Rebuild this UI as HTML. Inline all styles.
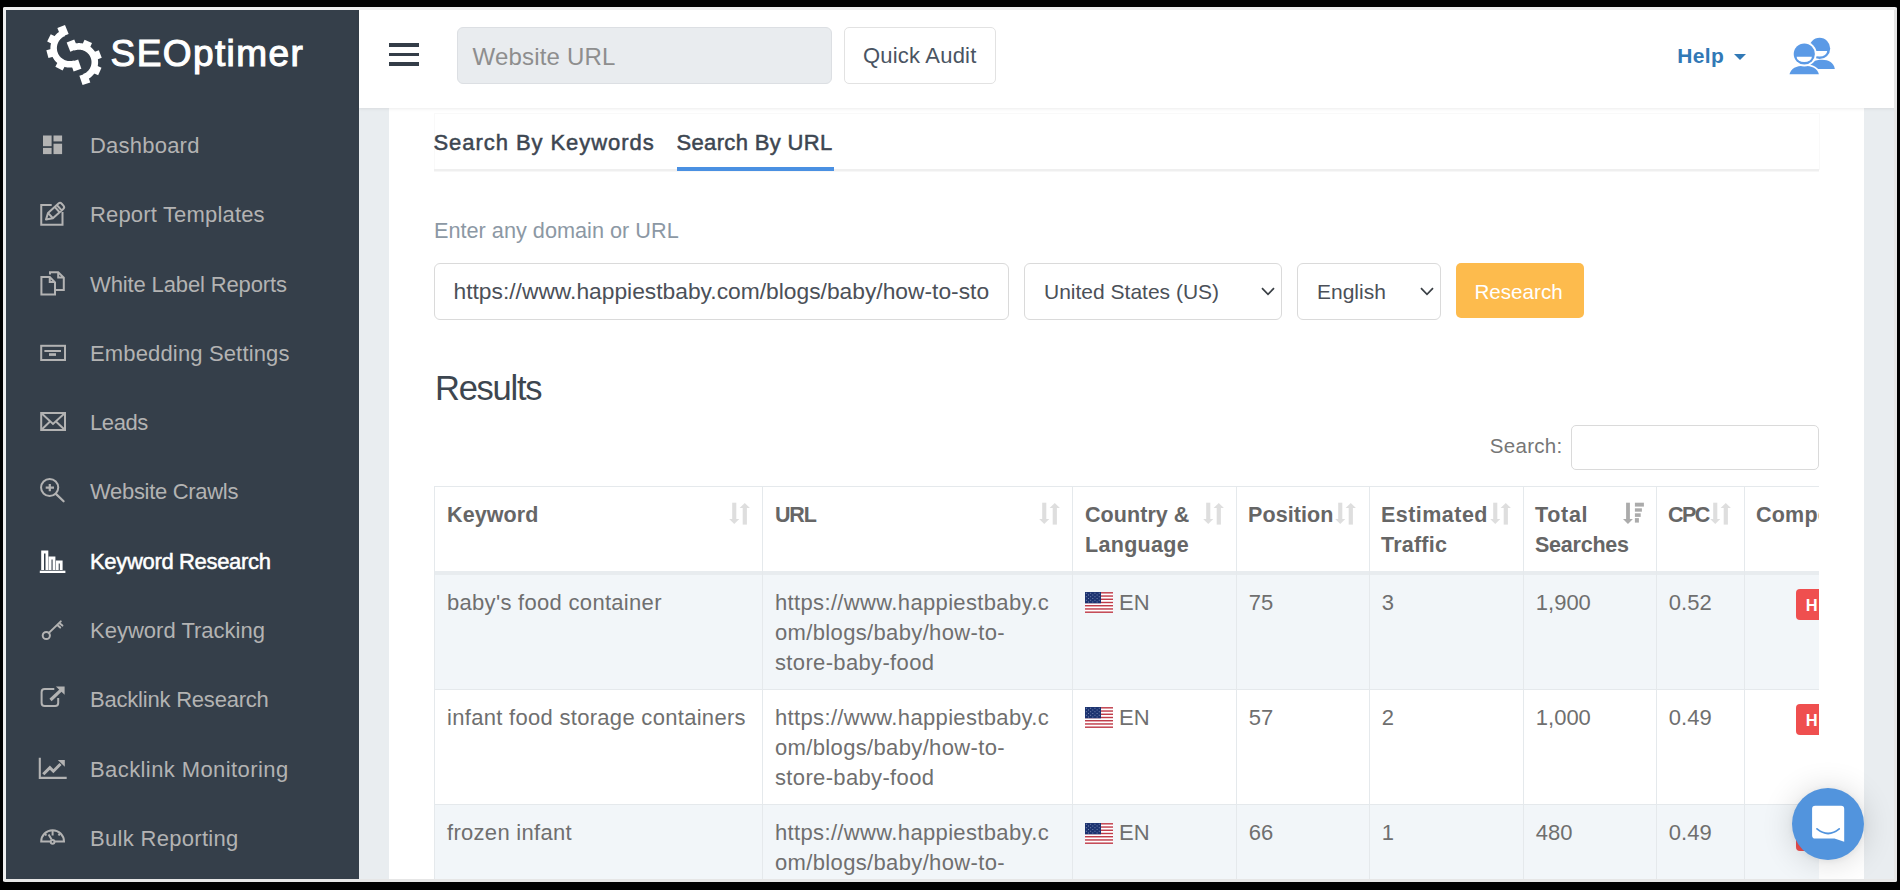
<!DOCTYPE html><html><head><meta charset="utf-8"><style>
html,body{margin:0;padding:0;background:#000;width:1900px;height:890px;overflow:hidden}
.abs{position:absolute;display:block}
.t{position:absolute;white-space:nowrap;font-family:"Liberation Sans",sans-serif}
#frame{position:absolute;left:3px;top:7px;width:1888px;height:869px;border:3px solid;border-color:#eeeeee #e6e6e6 #e6e6e6 #eeeeee;border-radius:2px;overflow:hidden;background:#e9edf0}
#in{position:absolute;left:-6px;top:-10px;width:1900px;height:890px}
</style></head><body>
<div id="frame"><div id="in">
<div class="abs" style="left:0;top:0;width:359px;height:890px;background:#353f4a"></div>
<svg class="abs" style="left:0;top:0" width="130" height="100" viewBox="0 0 130 100"><path d="M76.25,66.54 L75.61,66.74 L74.97,66.93 L74.32,67.09 L73.67,67.23 L73.01,67.35 L72.34,67.45 L71.68,67.52 L71.01,67.57 L70.34,67.59 L69.67,67.60 L69.00,67.58 L68.34,67.54 L67.67,67.47 L67.01,67.38 L66.35,67.27 L65.69,67.14 L65.04,66.98 L64.39,66.81 L63.76,66.61 L63.12,66.38 L62.50,66.14 L61.89,65.88 L61.28,65.59 L60.69,65.29 L60.10,64.96 L59.53,64.61 L58.97,64.25 L58.42,63.86 L57.89,63.46 L57.37,63.04 L56.86,62.60 L56.37,62.14 L55.90,61.67 L55.44,61.18 L55.00,60.68 L54.58,60.16 L54.17,59.63 L53.78,59.08 L53.42,58.52 L53.07,57.95 L52.74,57.36 L52.43,56.77 L52.15,56.17 L51.88,55.55 L51.63,54.93 L51.41,54.30 L51.21,53.66 L51.03,53.02 L50.87,52.36 L50.74,51.71 L50.62,51.05 L50.53,50.39 L50.47,49.72 L50.42,49.05 L50.40,48.38 L50.40,47.71 L50.43,47.05 L50.48,46.38 L50.55,45.71 L50.64,45.05 L50.76,44.39 L50.89,43.74 L51.06,43.09 L51.24,42.44 L51.44,41.81 L51.67,41.18 L51.92,40.55 L52.19,39.94 L52.48,39.34 L52.79,38.75 L53.12,38.16 L53.47,37.59 L53.84,37.04 L54.23,36.49 L54.64,35.96 L55.06,35.44 L55.51,34.94 L55.97,34.46 L56.44,33.99 L56.94,33.53 L57.44,33.10 L57.97,32.68 L58.50,32.28 L59.05,31.90 L59.61,31.53 L60.19,31.19 L60.78,30.87 L61.37,30.56 L61.98,30.28 L62.60,30.02 L65.03,36.05 L64.62,36.22 L64.21,36.41 L63.82,36.61 L63.43,36.83 L63.04,37.06 L62.67,37.30 L62.30,37.55 L61.94,37.82 L61.60,38.10 L61.26,38.39 L60.93,38.69 L60.61,39.00 L60.31,39.33 L60.01,39.66 L59.73,40.01 L59.45,40.36 L59.19,40.72 L58.95,41.10 L58.71,41.48 L58.49,41.86 L58.29,42.26 L58.09,42.66 L57.91,43.07 L57.75,43.48 L57.60,43.90 L57.46,44.33 L57.34,44.76 L57.23,45.19 L57.14,45.63 L57.06,46.07 L57.00,46.51 L56.95,46.95 L56.92,47.40 L56.90,47.84 L56.90,48.29 L56.92,48.74 L56.94,49.18 L56.99,49.62 L57.05,50.07 L57.12,50.51 L57.21,50.94 L57.32,51.38 L57.44,51.81 L57.57,52.23 L57.72,52.65 L57.89,53.07 L58.06,53.48 L58.26,53.88 L58.46,54.28 L58.68,54.67 L58.91,55.05 L59.16,55.42 L59.41,55.78 L59.68,56.14 L59.97,56.49 L60.26,56.82 L60.56,57.15 L60.88,57.46 L61.21,57.77 L61.54,58.06 L61.89,58.34 L62.25,58.61 L62.61,58.86 L62.99,59.11 L63.37,59.34 L63.76,59.56 L64.15,59.76 L64.56,59.95 L64.97,60.13 L65.38,60.29 L65.80,60.44 L66.23,60.57 L66.66,60.69 L67.09,60.79 L67.53,60.88 L67.97,60.96 L68.41,61.01 L68.86,61.06 L69.30,61.09 L69.75,61.10 L70.19,61.10 L70.64,61.08 L71.09,61.05 L71.53,61.00 L71.97,60.93 L72.41,60.86 L72.85,60.76 L73.28,60.65 L73.71,60.53 L74.13,60.39Z" fill="#fff"/><rect x="13.50" y="-4.10" width="9.80" height="8.2" fill="#fff" transform="translate(69.9,48.1) rotate(71)"/><rect x="13.50" y="-4.10" width="9.80" height="8.2" fill="#fff" transform="translate(69.9,48.1) rotate(118)"/><rect x="13.50" y="-4.10" width="9.80" height="8.2" fill="#fff" transform="translate(69.9,48.1) rotate(165)"/><rect x="13.50" y="-4.10" width="9.80" height="8.2" fill="#fff" transform="translate(69.9,48.1) rotate(206)"/><rect x="13.50" y="-4.10" width="9.80" height="8.2" fill="#fff" transform="translate(69.9,48.1) rotate(248)"/><path d="M71.85,44.49 L72.48,44.25 L73.12,44.03 L73.77,43.83 L74.42,43.66 L75.08,43.51 L75.75,43.38 L76.42,43.28 L77.09,43.20 L77.77,43.14 L78.44,43.11 L79.12,43.10 L79.80,43.12 L80.48,43.16 L81.15,43.22 L81.82,43.31 L82.49,43.42 L83.16,43.56 L83.81,43.72 L84.47,43.90 L85.11,44.10 L85.75,44.33 L86.38,44.58 L87.00,44.86 L87.61,45.15 L88.21,45.47 L88.80,45.81 L89.37,46.16 L89.94,46.54 L90.49,46.94 L91.02,47.36 L91.54,47.79 L92.04,48.25 L92.53,48.72 L93.00,49.21 L93.45,49.71 L93.89,50.23 L94.30,50.77 L94.70,51.32 L95.07,51.88 L95.43,52.46 L95.76,53.05 L96.08,53.65 L96.37,54.26 L96.64,54.88 L96.89,55.51 L97.12,56.15 L97.32,56.80 L97.50,57.45 L97.66,58.11 L97.79,58.77 L97.90,59.44 L97.99,60.12 L98.05,60.79 L98.09,61.47 L98.10,62.14 L98.09,62.82 L98.06,63.50 L98.00,64.17 L97.92,64.85 L97.81,65.52 L97.68,66.18 L97.53,66.84 L97.35,67.50 L97.15,68.14 L96.93,68.78 L96.68,69.42 L96.42,70.04 L96.13,70.65 L95.82,71.26 L95.49,71.85 L95.13,72.42 L94.76,72.99 L94.37,73.54 L93.95,74.08 L93.52,74.60 L93.07,75.11 L92.61,75.60 L92.12,76.08 L91.62,76.53 L91.11,76.97 L90.57,77.39 L90.03,77.79 L89.47,78.18 L88.89,78.54 L88.31,78.88 L87.71,79.20 L87.10,79.50 L86.48,79.77 L85.86,80.03 L85.22,80.26 L83.07,74.02 L83.49,73.87 L83.90,73.70 L84.30,73.52 L84.70,73.32 L85.09,73.12 L85.48,72.89 L85.85,72.66 L86.22,72.41 L86.57,72.14 L86.92,71.87 L87.26,71.58 L87.59,71.28 L87.91,70.97 L88.21,70.65 L88.51,70.32 L88.79,69.98 L89.06,69.62 L89.31,69.26 L89.56,68.89 L89.79,68.51 L90.01,68.13 L90.21,67.73 L90.40,67.33 L90.57,66.92 L90.73,66.51 L90.88,66.09 L91.01,65.67 L91.13,65.24 L91.23,64.81 L91.31,64.37 L91.38,63.93 L91.43,63.49 L91.47,63.05 L91.49,62.61 L91.50,62.16 L91.49,61.72 L91.47,61.28 L91.43,60.84 L91.37,60.40 L91.30,59.96 L91.21,59.52 L91.11,59.09 L90.99,58.66 L90.86,58.24 L90.71,57.82 L90.55,57.41 L90.37,57.00 L90.18,56.60 L89.97,56.21 L89.75,55.82 L89.52,55.45 L89.27,55.08 L89.01,54.72 L88.74,54.37 L88.46,54.03 L88.16,53.70 L87.85,53.38 L87.54,53.07 L87.21,52.77 L86.87,52.49 L86.52,52.21 L86.16,51.95 L85.79,51.70 L85.41,51.47 L85.03,51.25 L84.64,51.04 L84.24,50.85 L83.83,50.67 L83.42,50.51 L83.00,50.36 L82.58,50.22 L82.15,50.10 L81.72,50.00 L81.29,49.91 L80.85,49.84 L80.41,49.78 L79.97,49.74 L79.52,49.71 L79.08,49.70 L78.64,49.71 L78.19,49.73 L77.75,49.76 L77.31,49.81 L76.87,49.88 L76.44,49.97 L76.00,50.06 L75.58,50.18 L75.15,50.31 L74.73,50.45 L74.32,50.61Z" fill="#fff"/><rect x="13.00" y="-4.10" width="9.80" height="8.2" fill="#fff" transform="translate(79,62.2) rotate(-112)"/><rect x="13.00" y="-4.10" width="9.80" height="8.2" fill="#fff" transform="translate(79,62.2) rotate(-66)"/><rect x="13.00" y="-4.10" width="9.80" height="8.2" fill="#fff" transform="translate(79,62.2) rotate(-21)"/><rect x="13.00" y="-4.10" width="9.80" height="8.2" fill="#fff" transform="translate(79,62.2) rotate(24)"/><rect x="13.00" y="-4.10" width="9.80" height="8.2" fill="#fff" transform="translate(79,62.2) rotate(71)"/></svg><div class="t" style="left:110.60px;top:30.08px;font-size:37px;line-height:48px;font-weight:400;color:#fff;letter-spacing:1.4px;-webkit-text-stroke:1.1px #fff;">SEOptimer</div>
<div class="t" style="left:90.00px;top:130.88px;font-size:22px;line-height:29px;font-weight:400;color:#b3b3b3;letter-spacing:0.22px;">Dashboard</div>
<svg class="abs" style="left:36px;top:127.70px" width="34" height="34" viewBox="0 0 34 34" overflow="visible"><rect x="7" y="7.5" width="8.6" height="10.7" fill="#b3b3b3"/><rect x="7" y="19.9" width="8.6" height="6.2" fill="#b3b3b3"/><rect x="17.5" y="7.5" width="8.6" height="5.9" fill="#b3b3b3"/><rect x="17.5" y="15.7" width="8.6" height="10.4" fill="#b3b3b3"/></svg>
<div class="t" style="left:90.00px;top:199.88px;font-size:22px;line-height:29px;font-weight:400;color:#b3b3b3;letter-spacing:0.17px;">Report Templates</div>
<svg class="abs" style="left:36px;top:196.70px" width="34" height="34" viewBox="0 0 34 34" overflow="visible"><path d="M15.7,8 H5.25 V27.7 H26.5 V15.1" fill="none" stroke="#b3b3b3" stroke-width="2"/>
<g transform="translate(10,22.6) rotate(-42)"><path d="M0,0 L6,-3.6 H20 Q22.3,-3.6 22.3,-1.3 V1.3 Q22.3,3.6 20,3.6 H6 Z M6,-3.6 V3.6 M15,-3.6 V3.6 M17.8,-3.6 V3.6" fill="none" stroke="#b3b3b3" stroke-width="2" stroke-linejoin="round"/></g></svg>
<div class="t" style="left:90.00px;top:269.88px;font-size:22px;line-height:29px;font-weight:400;color:#b3b3b3;letter-spacing:-0.13px;">White Label Reports</div>
<svg class="abs" style="left:36px;top:266.00px" width="34" height="34" viewBox="0 0 34 34" overflow="visible"><path d="M5.4,28.4 V11.1 H13.75 L19,16.3 V28.4 Z M13.75,11.1 V16 H19" fill="none" stroke="#b3b3b3" stroke-width="2" stroke-linejoin="miter"/>
<path d="M14,8.5 V6.3 H22.2 L27.8,11.6 V24 H20 M22.2,6.3 V11.6 H27.8" fill="none" stroke="#b3b3b3" stroke-width="2"/></svg>
<div class="t" style="left:90.00px;top:338.88px;font-size:22px;line-height:29px;font-weight:400;color:#b3b3b3;letter-spacing:0.15px;">Embedding Settings</div>
<svg class="abs" style="left:36px;top:335.70px" width="34" height="34" viewBox="0 0 34 34" overflow="visible"><rect x="5.2" y="9.8" width="23.8" height="14.2" fill="none" stroke="#b3b3b3" stroke-width="2"/><rect x="8.4" y="14" width="16.6" height="2" fill="#b3b3b3"/><rect x="13" y="17.2" width="7" height="2.7" fill="#b3b3b3"/></svg>
<div class="t" style="left:90.00px;top:407.88px;font-size:22px;line-height:29px;font-weight:400;color:#b3b3b3;letter-spacing:-0.4px;">Leads</div>
<svg class="abs" style="left:36px;top:404.70px" width="34" height="34" viewBox="0 0 34 34" overflow="visible"><rect x="5.2" y="8" width="23.8" height="17" fill="none" stroke="#b3b3b3" stroke-width="2"/><path d="M5.5,8.3 L17,19 L28.7,8.3 M5.5,24.7 L13.5,17 M28.7,24.7 L20.5,17" fill="none" stroke="#b3b3b3" stroke-width="2"/></svg>
<div class="t" style="left:90.00px;top:476.88px;font-size:22px;line-height:29px;font-weight:400;color:#b3b3b3;letter-spacing:-0.31px;">Website Crawls</div>
<svg class="abs" style="left:36px;top:473.70px" width="34" height="34" viewBox="0 0 34 34" overflow="visible"><circle cx="13.65" cy="13.5" r="8.6" fill="none" stroke="#b3b3b3" stroke-width="2"/><path d="M9.7,13.7 H18 M13.8,9.9 V17.2" stroke="#b3b3b3" stroke-width="2.2"/><path d="M19.9,19.9 L27.6,27.3" stroke="#b3b3b3" stroke-width="2.2" stroke-linecap="round"/></svg>
<div class="t" style="left:90.00px;top:546.88px;font-size:22px;line-height:29px;font-weight:400;color:#fff;letter-spacing:-0.33px;-webkit-text-stroke:0.5px #fff;">Keyword Research</div>
<svg class="abs" style="left:36px;top:543.70px" width="34" height="34" viewBox="0 0 34 34" overflow="visible"><path d="M6.6,26 V8 H10.9 V26 M14.1,26 V14 H18 V26 M21.3,26 V18 H25.2 V26" fill="none" stroke="#fff" stroke-width="2.8"/><rect x="3.8" y="26.7" width="25.6" height="2.3" fill="#fff"/></svg>
<div class="t" style="left:90.00px;top:615.88px;font-size:22px;line-height:29px;font-weight:400;color:#b3b3b3;letter-spacing:0.01px;">Keyword Tracking</div>
<svg class="abs" style="left:36px;top:612.70px" width="34" height="34" viewBox="0 0 34 34" overflow="visible"><circle cx="10.3" cy="22.5" r="3.6" fill="none" stroke="#b3b3b3" stroke-width="2"/><path d="M12.9,19.9 L24.8,8.4 M21.6,12.2 L24.2,14.5 M23.5,10.2 L26.4,12.6" fill="none" stroke="#b3b3b3" stroke-width="2" stroke-linecap="round"/></svg>
<div class="t" style="left:90.00px;top:684.88px;font-size:22px;line-height:29px;font-weight:400;color:#b3b3b3;letter-spacing:-0.21px;">Backlink Research</div>
<svg class="abs" style="left:36px;top:681.70px" width="34" height="34" viewBox="0 0 34 34" overflow="visible"><path d="M18.3,7 H8.6 A3,3 0 0 0 5.6,10 V21 A3,3 0 0 0 8.6,24 H19.2 A3,3 0 0 0 22.2,21 V16" fill="none" stroke="#b3b3b3" stroke-width="2"/><path d="M14.5,18 L25,8.2" stroke="#b3b3b3" stroke-width="3.2"/><path d="M19.9,4.4 H28.6 V12.8 Z" fill="#b3b3b3"/></svg>
<div class="t" style="left:90.00px;top:754.88px;font-size:22px;line-height:29px;font-weight:400;color:#b3b3b3;letter-spacing:0.41px;">Backlink Monitoring</div>
<svg class="abs" style="left:36px;top:751.70px" width="34" height="34" viewBox="0 0 34 34" overflow="visible"><path d="M3.8,5.7 V25.9 H30.7" fill="none" stroke="#b3b3b3" stroke-width="2.1"/><path d="M7.3,22.3 L13.9,15.6 L17.4,19.2 L24.5,12" fill="none" stroke="#b3b3b3" stroke-width="3"/><path d="M21.8,8 H28.8 V14.7 Z" fill="#b3b3b3"/></svg>
<div class="t" style="left:90.00px;top:823.88px;font-size:22px;line-height:29px;font-weight:400;color:#b3b3b3;letter-spacing:0.31px;">Bulk Reporting</div>
<svg class="abs" style="left:36px;top:820.70px" width="34" height="34" viewBox="0 0 34 34" overflow="visible"><path d="M14.6,20.6 H5.2 A11.4,11.4 0 0 1 28,20.6 H18.6" fill="none" stroke="#b3b3b3" stroke-width="2"/><circle cx="16.6" cy="20.8" r="1.9" fill="none" stroke="#b3b3b3" stroke-width="2"/><path d="M16.6,9.9 V14.5 M8.9,12.5 L10.3,14.5 M23.8,12.5 L22.6,14.5 M12.6,13.6 L15.6,18.6" fill="none" stroke="#b3b3b3" stroke-width="2"/></svg>
<div class="abs" style="left:359px;top:0;width:1541px;height:108px;background:#fff;box-shadow:0 1px 3px rgba(0,0,0,0.08);z-index:3"></div>
<div class="abs" style="z-index:4;left:0;top:0"><div class="abs" style="left:389px;top:43px;width:30px;height:4px;background:#343d48"></div>
<div class="abs" style="left:389px;top:52.5px;width:30px;height:3.8px;background:#343d48"></div>
<div class="abs" style="left:389px;top:62px;width:30px;height:4px;background:#343d48"></div>
<div class="abs" style="left:457px;top:27px;width:373px;height:55px;background:#e9ecef;border:1px solid #dcdfe3;border-radius:6px"></div>
<div class="t" style="left:472.50px;top:41.38px;font-size:24px;line-height:31px;font-weight:400;color:#8e8e8e;letter-spacing:0.2px;">Website URL</div>

<div class="abs" style="left:844px;top:27px;width:150px;height:55px;background:#fff;border:1px solid #e2e2e2;border-radius:5px"></div>
<div class="t" style="left:863.00px;top:41.08px;font-size:22px;line-height:29px;font-weight:400;color:#4a5462;letter-spacing:0.2px;">Quick Audit</div>

<div class="t" style="left:1677.30px;top:41.92px;font-size:21px;line-height:27px;font-weight:700;color:#3179b6;letter-spacing:0.35px;">Help</div>

<svg class="abs" style="left:1734px;top:54px" width="12" height="6" viewBox="0 0 12 6"><path d="M0,0 H12 L6,6 Z" fill="#3179b6"/></svg>
<svg class="abs" style="left:1780px;top:30px" width="60" height="50" viewBox="1780 30 60 50">
<circle cx="1819.6" cy="48.4" r="10.6" fill="#5b9ae6"/>
<path d="M1812,51 H1827.2 A7.6,5.5 0 0 1 1812,51 Z" fill="#fff"/>
<path d="M1808,68.9 C1810,62 1815,59.8 1822,59.8 C1829,59.8 1833.5,62.5 1834.8,68.9 Z" fill="#5b9ae6"/>
<path d="M1787,75.5 C1788.5,67.5 1795,64 1804,64 C1813,64 1819.5,67.5 1821.2,75.5 Z" fill="#fff"/>
<path d="M1789.5,74.2 C1791,68.5 1796,65.8 1804,65.8 C1812,65.8 1817.5,68.5 1818.9,74.2 Z" fill="#5b9ae6"/>
<circle cx="1804.3" cy="54" r="12.5" fill="#fff"/>
<circle cx="1804.3" cy="54" r="10.6" fill="#5b9ae6"/>
<path d="M1796.6,56.8 H1811.9 A7.65,5.3 0 0 1 1796.6,56.8 Z" fill="#fff"/>
</svg></div>
<div class="abs" style="left:389px;top:108px;width:1475px;height:790px;background:#fff"></div>
<div class="abs" style="left:434px;top:113px;width:1384px;height:56px;border:1px solid #f9f9f9;border-bottom:none"></div>
<div class="abs" style="left:434px;top:169px;width:1385px;height:2px;background:#efefef"></div><div class="abs" style="left:434px;top:171px;width:1385px;height:1px;background:#f7f7f7"></div>
<div class="t" style="left:433.50px;top:127.88px;font-size:22px;line-height:29px;font-weight:400;color:#3d4651;letter-spacing:0.94px;-webkit-text-stroke:0.5px #3d4651;">Search By Keywords</div>
<div class="t" style="left:676.50px;top:127.88px;font-size:22px;line-height:29px;font-weight:400;color:#3d4651;letter-spacing:0.34px;-webkit-text-stroke:0.5px #3d4651;">Search By URL</div>
<div class="abs" style="left:677px;top:167px;width:157px;height:3.6px;background:#4a90e2"></div>
<div class="t" style="left:434.00px;top:216.68px;font-size:21.7px;line-height:28px;font-weight:400;color:#8c98a4;">Enter any domain or URL</div>
<div class="abs" style="left:434px;top:263px;width:573px;height:55px;border:1px solid #dadada;border-radius:6px;background:#fff"></div>
<div class="abs" style="left:435px;top:264px;width:556px;height:55px;overflow:hidden"><div class="t" style="left:18.50px;top:11.70px;font-size:22.8px;line-height:30px;font-weight:400;color:#4b5058;">https://www.happiestbaby.com/blogs/baby/how-to-sto</div>
</div>
<div class="abs" style="left:1024px;top:263px;width:256px;height:55px;border:1px solid #dadada;border-radius:6px;background:#fff"></div>
<div class="t" style="left:1044.00px;top:277.72px;font-size:21px;line-height:27px;font-weight:400;color:#4b5058;">United States (US)</div>
<svg class="abs" style="left:1261px;top:287px" width="14" height="9" viewBox="0 0 14 9"><path d="M1,1.2 L7,7.4 L13,1.2" fill="none" stroke="#3a3f45" stroke-width="1.7"/></svg>
<div class="abs" style="left:1297px;top:263px;width:142px;height:55px;border:1px solid #dadada;border-radius:6px;background:#fff"></div>
<div class="t" style="left:1317.00px;top:277.72px;font-size:21px;line-height:27px;font-weight:400;color:#4b5058;">English</div>
<svg class="abs" style="left:1420px;top:287px" width="14" height="9" viewBox="0 0 14 9"><path d="M1,1.2 L7,7.4 L13,1.2" fill="none" stroke="#3a3f45" stroke-width="1.7"/></svg>
<div class="abs" style="left:1456px;top:263px;width:128px;height:55px;background:#fdbb4d;border-radius:5px"></div>
<div class="t" style="left:1474.50px;top:278.06px;font-size:20.6px;line-height:27px;font-weight:400;color:#fff;">Research</div>
<div class="t" style="left:435.00px;top:366.15px;font-size:34.5px;line-height:45px;font-weight:400;color:#3d4650;letter-spacing:-1.25px;">Results</div>
<div class="t" style="left:1489.80px;top:432.20px;font-size:20.5px;line-height:27px;font-weight:400;color:#767676;letter-spacing:0.3px;">Search:</div>
<div class="abs" style="left:1571px;top:425px;width:246px;height:43px;border:1px solid #dadada;border-radius:5px;background:#fff"></div>
<div class="abs" style="left:0;top:0;width:1819px;height:890px;overflow:hidden"><div class="abs" style="left:434px;top:575px;width:1400px;height:114.5px;background:#f2f6f9"></div>
<div class="abs" style="left:434px;top:804.3px;width:1400px;height:100px;background:#f2f6f9"></div>
<div class="abs" style="left:434px;top:486px;width:1400px;height:1px;background:#e5e9ec"></div>
<div class="abs" style="left:434px;top:571px;width:1400px;height:4px;background:#e8ecef"></div>
<div class="abs" style="left:434px;top:689.0px;width:1400px;height:1px;background:#e5e9ec"></div>
<div class="abs" style="left:434px;top:803.8px;width:1400px;height:1px;background:#e5e9ec"></div>
<div class="abs" style="left:434.0px;top:486px;width:1px;height:410px;background:#e5e9ec"></div>
<div class="abs" style="left:762.0px;top:486px;width:1px;height:410px;background:#e5e9ec"></div>
<div class="abs" style="left:1072.0px;top:486px;width:1px;height:410px;background:#e5e9ec"></div>
<div class="abs" style="left:1235.8px;top:486px;width:1px;height:410px;background:#e5e9ec"></div>
<div class="abs" style="left:1368.8px;top:486px;width:1px;height:410px;background:#e5e9ec"></div>
<div class="abs" style="left:1522.9px;top:486px;width:1px;height:410px;background:#e5e9ec"></div>
<div class="abs" style="left:1656.2px;top:486px;width:1px;height:410px;background:#e5e9ec"></div>
<div class="abs" style="left:1743.6px;top:486px;width:1px;height:410px;background:#e5e9ec"></div>
<div class="t" style="left:447.00px;top:500.55px;font-size:21.5px;line-height:28px;font-weight:700;color:#666;letter-spacing:0.1px;">Keyword</div>

<div class="t" style="left:775.00px;top:500.55px;font-size:21.5px;line-height:28px;font-weight:700;color:#666;letter-spacing:-1.2px;">URL</div>

<div class="t" style="left:1085.00px;top:500.55px;font-size:21.5px;line-height:28px;font-weight:700;color:#666;letter-spacing:0.06px;">Country &amp;</div>

<div class="t" style="left:1085.00px;top:530.75px;font-size:21.5px;line-height:28px;font-weight:700;color:#666;letter-spacing:0.31px;">Language</div>

<div class="t" style="left:1248.00px;top:500.55px;font-size:21.5px;line-height:28px;font-weight:700;color:#666;letter-spacing:0.09px;">Position</div>

<div class="t" style="left:1381.00px;top:500.55px;font-size:21.5px;line-height:28px;font-weight:700;color:#666;letter-spacing:0.46px;">Estimated</div>

<div class="t" style="left:1381.00px;top:530.75px;font-size:21.5px;line-height:28px;font-weight:700;color:#666;letter-spacing:0.22px;">Traffic</div>

<div class="t" style="left:1535.00px;top:500.55px;font-size:21.5px;line-height:28px;font-weight:700;color:#666;letter-spacing:0.7px;">Total</div>

<div class="t" style="left:1535.00px;top:530.75px;font-size:21.5px;line-height:28px;font-weight:700;color:#666;letter-spacing:-0.23px;">Searches</div>

<div class="t" style="left:1668.00px;top:500.55px;font-size:21.5px;line-height:28px;font-weight:700;color:#666;letter-spacing:-1.6px;">CPC</div>

<div class="t" style="left:1756.00px;top:500.55px;font-size:21.5px;line-height:28px;font-weight:700;color:#666;letter-spacing:0.2px;">Competition</div>

<svg class="abs" style="left:724px;top:498px" width="32" height="32" viewBox="0 0 32 32"><rect x="8.2" y="4.7" width="4.1" height="16.5" fill="#dedede"/><path d="M5.2,20.9 H15.3 L10.25,25.9 Z" fill="#dedede"/><path d="M15.6,9.9 H25.9 L20.75,5 Z" fill="#dedede"/><rect x="18.7" y="9.5" width="4.2" height="17.1" fill="#dedede"/></svg>
<svg class="abs" style="left:1034px;top:498px" width="32" height="32" viewBox="0 0 32 32"><rect x="8.2" y="4.7" width="4.1" height="16.5" fill="#dedede"/><path d="M5.2,20.9 H15.3 L10.25,25.9 Z" fill="#dedede"/><path d="M15.6,9.9 H25.9 L20.75,5 Z" fill="#dedede"/><rect x="18.7" y="9.5" width="4.2" height="17.1" fill="#dedede"/></svg>
<svg class="abs" style="left:1198px;top:498px" width="32" height="32" viewBox="0 0 32 32"><rect x="8.2" y="4.7" width="4.1" height="16.5" fill="#dedede"/><path d="M5.2,20.9 H15.3 L10.25,25.9 Z" fill="#dedede"/><path d="M15.6,9.9 H25.9 L20.75,5 Z" fill="#dedede"/><rect x="18.7" y="9.5" width="4.2" height="17.1" fill="#dedede"/></svg>
<svg class="abs" style="left:1330px;top:498px" width="32" height="32" viewBox="0 0 32 32"><rect x="8.2" y="4.7" width="4.1" height="16.5" fill="#dedede"/><path d="M5.2,20.9 H15.3 L10.25,25.9 Z" fill="#dedede"/><path d="M15.6,9.9 H25.9 L20.75,5 Z" fill="#dedede"/><rect x="18.7" y="9.5" width="4.2" height="17.1" fill="#dedede"/></svg>
<svg class="abs" style="left:1485px;top:498px" width="32" height="32" viewBox="0 0 32 32"><rect x="8.2" y="4.7" width="4.1" height="16.5" fill="#dedede"/><path d="M5.2,20.9 H15.3 L10.25,25.9 Z" fill="#dedede"/><path d="M15.6,9.9 H25.9 L20.75,5 Z" fill="#dedede"/><rect x="18.7" y="9.5" width="4.2" height="17.1" fill="#dedede"/></svg>
<svg class="abs" style="left:1618px;top:498px" width="32" height="32" viewBox="0 0 32 32"><rect x="8.1" y="4.7" width="3.8" height="16.5" fill="#ababab"/><path d="M5,21 H14.9 L9.95,25.9 Z" fill="#ababab"/><rect x="16.9" y="4.7" width="9" height="3.9" fill="#ababab"/><rect x="16.9" y="10.3" width="7" height="3.4" fill="#ababab"/><rect x="16.9" y="15.3" width="5.8" height="3.6" fill="#ababab"/><rect x="16.9" y="20.1" width="4" height="4.5" fill="#ababab"/></svg>
<svg class="abs" style="left:1705px;top:498px" width="32" height="32" viewBox="0 0 32 32"><rect x="8.2" y="4.7" width="4.1" height="16.5" fill="#dedede"/><path d="M5.2,20.9 H15.3 L10.25,25.9 Z" fill="#dedede"/><path d="M15.6,9.9 H25.9 L20.75,5 Z" fill="#dedede"/><rect x="18.7" y="9.5" width="4.2" height="17.1" fill="#dedede"/></svg>
<div class="t" style="left:447.00px;top:587.68px;font-size:22px;line-height:29px;font-weight:400;color:#6f6f6f;letter-spacing:0.3px;">baby's food container</div>

<div class="t" style="left:775.00px;top:587.68px;font-size:22px;line-height:29px;font-weight:400;color:#6f6f6f;letter-spacing:0.35px;">https://www.happiestbaby.c</div>

<div class="t" style="left:775.00px;top:617.88px;font-size:22px;line-height:29px;font-weight:400;color:#6f6f6f;letter-spacing:0.35px;">om/blogs/baby/how-to-</div>

<div class="t" style="left:775.00px;top:648.08px;font-size:22px;line-height:29px;font-weight:400;color:#6f6f6f;letter-spacing:0.35px;">store-baby-food</div>

<svg class="abs" style="left:1085px;top:592.0px" width="28" height="21" viewBox="0 0 28 21"><rect width="28" height="21" fill="#fff"/><rect x="0" y="0.10" width="28" height="1.42" fill="#bf3a48"/><rect x="0" y="3.33" width="28" height="1.42" fill="#bf3a48"/><rect x="0" y="6.56" width="28" height="1.42" fill="#bf3a48"/><rect x="0" y="9.79" width="28" height="1.42" fill="#bf3a48"/><rect x="0" y="13.02" width="28" height="1.42" fill="#bf3a48"/><rect x="0" y="16.25" width="28" height="1.42" fill="#bf3a48"/><rect x="0" y="19.48" width="28" height="1.42" fill="#bf3a48"/><rect x="0" y="0" width="16" height="11.31" fill="#1c3370"/><rect x="0.90" y="0.80" width="0.9" height="0.9" fill="#8d9cc0"/><rect x="5.20" y="0.80" width="0.9" height="0.9" fill="#8d9cc0"/><rect x="9.50" y="0.80" width="0.9" height="0.9" fill="#8d9cc0"/><rect x="13.80" y="0.80" width="0.9" height="0.9" fill="#8d9cc0"/><rect x="3.05" y="2.55" width="0.9" height="0.9" fill="#8d9cc0"/><rect x="7.35" y="2.55" width="0.9" height="0.9" fill="#8d9cc0"/><rect x="11.65" y="2.55" width="0.9" height="0.9" fill="#8d9cc0"/><rect x="0.90" y="4.30" width="0.9" height="0.9" fill="#8d9cc0"/><rect x="5.20" y="4.30" width="0.9" height="0.9" fill="#8d9cc0"/><rect x="9.50" y="4.30" width="0.9" height="0.9" fill="#8d9cc0"/><rect x="13.80" y="4.30" width="0.9" height="0.9" fill="#8d9cc0"/><rect x="3.05" y="6.05" width="0.9" height="0.9" fill="#8d9cc0"/><rect x="7.35" y="6.05" width="0.9" height="0.9" fill="#8d9cc0"/><rect x="11.65" y="6.05" width="0.9" height="0.9" fill="#8d9cc0"/><rect x="0.90" y="7.80" width="0.9" height="0.9" fill="#8d9cc0"/><rect x="5.20" y="7.80" width="0.9" height="0.9" fill="#8d9cc0"/><rect x="9.50" y="7.80" width="0.9" height="0.9" fill="#8d9cc0"/><rect x="13.80" y="7.80" width="0.9" height="0.9" fill="#8d9cc0"/><rect x="3.05" y="9.55" width="0.9" height="0.9" fill="#8d9cc0"/><rect x="7.35" y="9.55" width="0.9" height="0.9" fill="#8d9cc0"/><rect x="11.65" y="9.55" width="0.9" height="0.9" fill="#8d9cc0"/></svg>
<div class="t" style="left:1119.00px;top:587.68px;font-size:22px;line-height:29px;font-weight:400;color:#6f6f6f;">EN</div>

<div class="t" style="left:1248.80px;top:587.68px;font-size:22px;line-height:29px;font-weight:400;color:#6f6f6f;">75</div>

<div class="t" style="left:1381.80px;top:587.68px;font-size:22px;line-height:29px;font-weight:400;color:#6f6f6f;">3</div>

<div class="t" style="left:1535.80px;top:587.68px;font-size:22px;line-height:29px;font-weight:400;color:#6f6f6f;">1,900</div>

<div class="t" style="left:1668.80px;top:587.68px;font-size:22px;line-height:29px;font-weight:400;color:#6f6f6f;">0.52</div>

<div class="abs" style="left:1796px;top:589.00px;width:60px;height:31px;background:#ef4f4f;border-radius:4px"></div>
<div class="t" style="left:1805.80px;top:594.78px;font-size:16.5px;line-height:21px;font-weight:700;color:#fff;">H</div>

<div class="t" style="left:447.00px;top:702.93px;font-size:22px;line-height:29px;font-weight:400;color:#6f6f6f;letter-spacing:0.3px;">infant food storage containers</div>

<div class="t" style="left:775.00px;top:702.93px;font-size:22px;line-height:29px;font-weight:400;color:#6f6f6f;letter-spacing:0.35px;">https://www.happiestbaby.c</div>

<div class="t" style="left:775.00px;top:733.13px;font-size:22px;line-height:29px;font-weight:400;color:#6f6f6f;letter-spacing:0.35px;">om/blogs/baby/how-to-</div>

<div class="t" style="left:775.00px;top:763.33px;font-size:22px;line-height:29px;font-weight:400;color:#6f6f6f;letter-spacing:0.35px;">store-baby-food</div>

<svg class="abs" style="left:1085px;top:707.25px" width="28" height="21" viewBox="0 0 28 21"><rect width="28" height="21" fill="#fff"/><rect x="0" y="0.10" width="28" height="1.42" fill="#bf3a48"/><rect x="0" y="3.33" width="28" height="1.42" fill="#bf3a48"/><rect x="0" y="6.56" width="28" height="1.42" fill="#bf3a48"/><rect x="0" y="9.79" width="28" height="1.42" fill="#bf3a48"/><rect x="0" y="13.02" width="28" height="1.42" fill="#bf3a48"/><rect x="0" y="16.25" width="28" height="1.42" fill="#bf3a48"/><rect x="0" y="19.48" width="28" height="1.42" fill="#bf3a48"/><rect x="0" y="0" width="16" height="11.31" fill="#1c3370"/><rect x="0.90" y="0.80" width="0.9" height="0.9" fill="#8d9cc0"/><rect x="5.20" y="0.80" width="0.9" height="0.9" fill="#8d9cc0"/><rect x="9.50" y="0.80" width="0.9" height="0.9" fill="#8d9cc0"/><rect x="13.80" y="0.80" width="0.9" height="0.9" fill="#8d9cc0"/><rect x="3.05" y="2.55" width="0.9" height="0.9" fill="#8d9cc0"/><rect x="7.35" y="2.55" width="0.9" height="0.9" fill="#8d9cc0"/><rect x="11.65" y="2.55" width="0.9" height="0.9" fill="#8d9cc0"/><rect x="0.90" y="4.30" width="0.9" height="0.9" fill="#8d9cc0"/><rect x="5.20" y="4.30" width="0.9" height="0.9" fill="#8d9cc0"/><rect x="9.50" y="4.30" width="0.9" height="0.9" fill="#8d9cc0"/><rect x="13.80" y="4.30" width="0.9" height="0.9" fill="#8d9cc0"/><rect x="3.05" y="6.05" width="0.9" height="0.9" fill="#8d9cc0"/><rect x="7.35" y="6.05" width="0.9" height="0.9" fill="#8d9cc0"/><rect x="11.65" y="6.05" width="0.9" height="0.9" fill="#8d9cc0"/><rect x="0.90" y="7.80" width="0.9" height="0.9" fill="#8d9cc0"/><rect x="5.20" y="7.80" width="0.9" height="0.9" fill="#8d9cc0"/><rect x="9.50" y="7.80" width="0.9" height="0.9" fill="#8d9cc0"/><rect x="13.80" y="7.80" width="0.9" height="0.9" fill="#8d9cc0"/><rect x="3.05" y="9.55" width="0.9" height="0.9" fill="#8d9cc0"/><rect x="7.35" y="9.55" width="0.9" height="0.9" fill="#8d9cc0"/><rect x="11.65" y="9.55" width="0.9" height="0.9" fill="#8d9cc0"/></svg>
<div class="t" style="left:1119.00px;top:702.93px;font-size:22px;line-height:29px;font-weight:400;color:#6f6f6f;">EN</div>

<div class="t" style="left:1248.80px;top:702.93px;font-size:22px;line-height:29px;font-weight:400;color:#6f6f6f;">57</div>

<div class="t" style="left:1381.80px;top:702.93px;font-size:22px;line-height:29px;font-weight:400;color:#6f6f6f;">2</div>

<div class="t" style="left:1535.80px;top:702.93px;font-size:22px;line-height:29px;font-weight:400;color:#6f6f6f;">1,000</div>

<div class="t" style="left:1668.80px;top:702.93px;font-size:22px;line-height:29px;font-weight:400;color:#6f6f6f;">0.49</div>

<div class="abs" style="left:1796px;top:704.25px;width:60px;height:31px;background:#ef4f4f;border-radius:4px"></div>
<div class="t" style="left:1805.80px;top:710.03px;font-size:16.5px;line-height:21px;font-weight:700;color:#fff;">H</div>

<div class="t" style="left:447.00px;top:818.18px;font-size:22px;line-height:29px;font-weight:400;color:#6f6f6f;letter-spacing:0.3px;">frozen infant</div>

<div class="t" style="left:775.00px;top:818.18px;font-size:22px;line-height:29px;font-weight:400;color:#6f6f6f;letter-spacing:0.35px;">https://www.happiestbaby.c</div>

<div class="t" style="left:775.00px;top:848.38px;font-size:22px;line-height:29px;font-weight:400;color:#6f6f6f;letter-spacing:0.35px;">om/blogs/baby/how-to-</div>

<div class="t" style="left:775.00px;top:878.58px;font-size:22px;line-height:29px;font-weight:400;color:#6f6f6f;letter-spacing:0.35px;">store-baby-food</div>

<svg class="abs" style="left:1085px;top:822.5px" width="28" height="21" viewBox="0 0 28 21"><rect width="28" height="21" fill="#fff"/><rect x="0" y="0.10" width="28" height="1.42" fill="#bf3a48"/><rect x="0" y="3.33" width="28" height="1.42" fill="#bf3a48"/><rect x="0" y="6.56" width="28" height="1.42" fill="#bf3a48"/><rect x="0" y="9.79" width="28" height="1.42" fill="#bf3a48"/><rect x="0" y="13.02" width="28" height="1.42" fill="#bf3a48"/><rect x="0" y="16.25" width="28" height="1.42" fill="#bf3a48"/><rect x="0" y="19.48" width="28" height="1.42" fill="#bf3a48"/><rect x="0" y="0" width="16" height="11.31" fill="#1c3370"/><rect x="0.90" y="0.80" width="0.9" height="0.9" fill="#8d9cc0"/><rect x="5.20" y="0.80" width="0.9" height="0.9" fill="#8d9cc0"/><rect x="9.50" y="0.80" width="0.9" height="0.9" fill="#8d9cc0"/><rect x="13.80" y="0.80" width="0.9" height="0.9" fill="#8d9cc0"/><rect x="3.05" y="2.55" width="0.9" height="0.9" fill="#8d9cc0"/><rect x="7.35" y="2.55" width="0.9" height="0.9" fill="#8d9cc0"/><rect x="11.65" y="2.55" width="0.9" height="0.9" fill="#8d9cc0"/><rect x="0.90" y="4.30" width="0.9" height="0.9" fill="#8d9cc0"/><rect x="5.20" y="4.30" width="0.9" height="0.9" fill="#8d9cc0"/><rect x="9.50" y="4.30" width="0.9" height="0.9" fill="#8d9cc0"/><rect x="13.80" y="4.30" width="0.9" height="0.9" fill="#8d9cc0"/><rect x="3.05" y="6.05" width="0.9" height="0.9" fill="#8d9cc0"/><rect x="7.35" y="6.05" width="0.9" height="0.9" fill="#8d9cc0"/><rect x="11.65" y="6.05" width="0.9" height="0.9" fill="#8d9cc0"/><rect x="0.90" y="7.80" width="0.9" height="0.9" fill="#8d9cc0"/><rect x="5.20" y="7.80" width="0.9" height="0.9" fill="#8d9cc0"/><rect x="9.50" y="7.80" width="0.9" height="0.9" fill="#8d9cc0"/><rect x="13.80" y="7.80" width="0.9" height="0.9" fill="#8d9cc0"/><rect x="3.05" y="9.55" width="0.9" height="0.9" fill="#8d9cc0"/><rect x="7.35" y="9.55" width="0.9" height="0.9" fill="#8d9cc0"/><rect x="11.65" y="9.55" width="0.9" height="0.9" fill="#8d9cc0"/></svg>
<div class="t" style="left:1119.00px;top:818.18px;font-size:22px;line-height:29px;font-weight:400;color:#6f6f6f;">EN</div>

<div class="t" style="left:1248.80px;top:818.18px;font-size:22px;line-height:29px;font-weight:400;color:#6f6f6f;">66</div>

<div class="t" style="left:1381.80px;top:818.18px;font-size:22px;line-height:29px;font-weight:400;color:#6f6f6f;">1</div>

<div class="t" style="left:1535.80px;top:818.18px;font-size:22px;line-height:29px;font-weight:400;color:#6f6f6f;">480</div>

<div class="t" style="left:1668.80px;top:818.18px;font-size:22px;line-height:29px;font-weight:400;color:#6f6f6f;">0.49</div>

<div class="abs" style="left:1796px;top:819.50px;width:60px;height:31px;background:#ef4f4f;border-radius:4px"></div>
<div class="t" style="left:1805.80px;top:825.28px;font-size:16.5px;line-height:21px;font-weight:700;color:#fff;">H</div>
</div>
<div class="abs" style="left:1792px;top:788px;width:72px;height:72px;border-radius:50%;background:#5294dd;box-shadow:0 1px 6px rgba(0,0,0,0.06),0 2px 32px rgba(0,0,0,0.16);z-index:5"></div>
<svg class="abs" style="left:1780px;top:776px;z-index:6" width="96" height="96" viewBox="1780 776 96 96">
<path d="M1815.2,805.7 H1841.1 A3.1,3.1 0 0 1 1844.2,808.8 V841.8 L1834.5,838.6 H1815.2 A3.1,3.1 0 0 1 1812.1,835.5 V808.8 A3.1,3.1 0 0 1 1815.2,805.7 Z" fill="#fff"/>
<path d="M1817,828.9 Q1828.1,838 1839.2,828.9" fill="none" stroke="#5294dd" stroke-width="1.8" stroke-linecap="round"/>
</svg>
</div></div></body></html>
